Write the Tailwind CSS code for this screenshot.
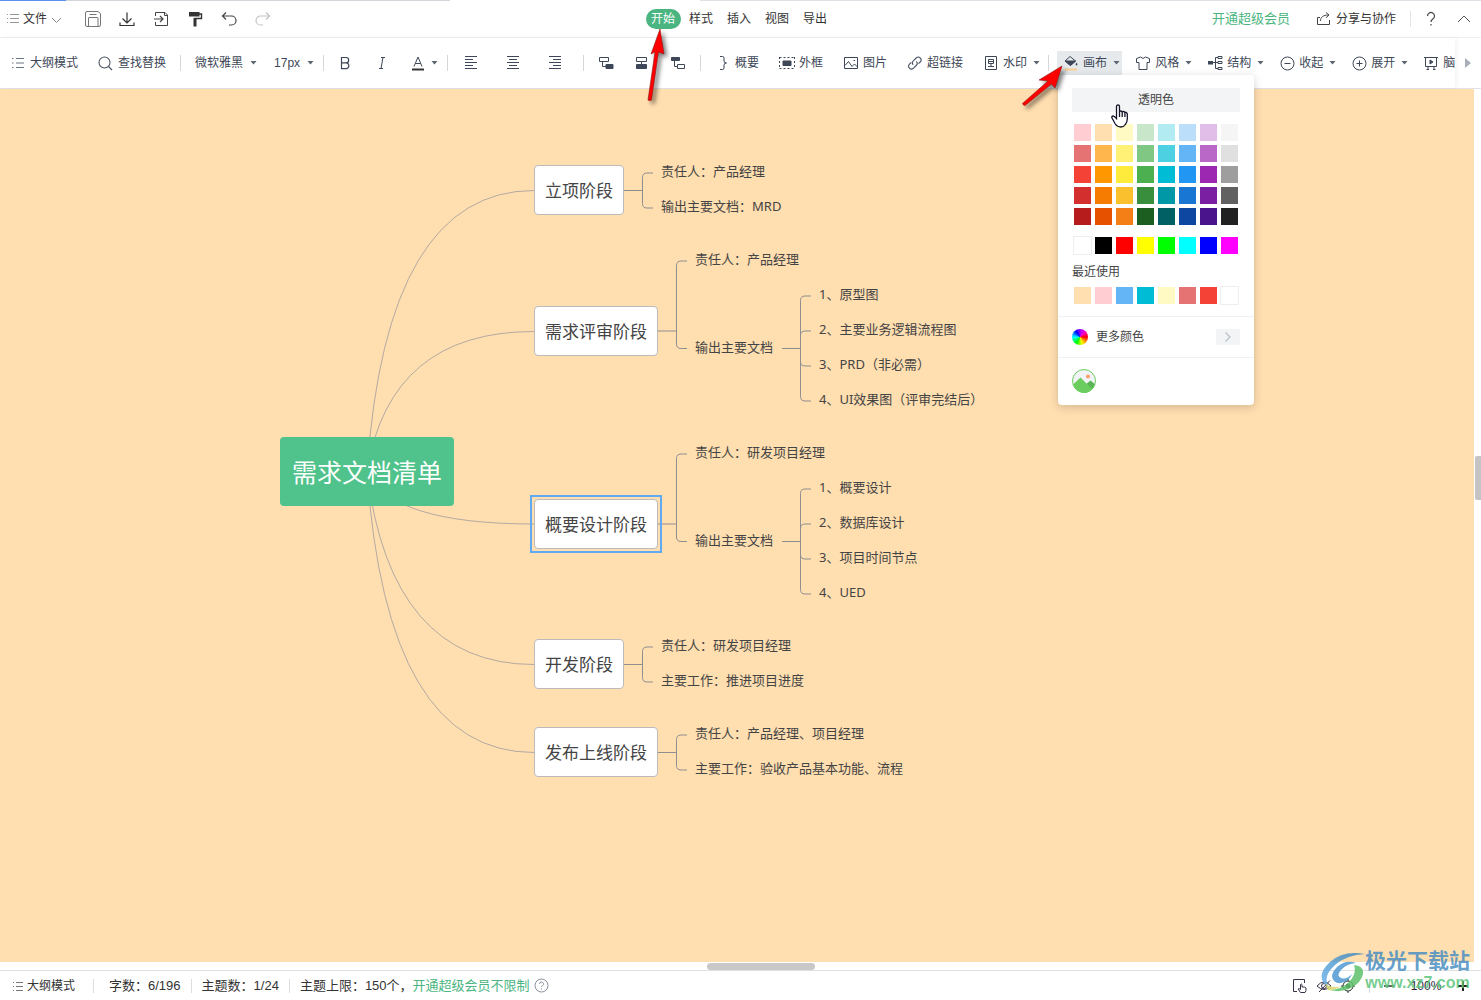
<!DOCTYPE html>
<html lang="zh-CN">
<head>
<meta charset="utf-8">
<meta name="viewport" content="width=device-width, initial-scale=1">
<title>需求文档清单</title>
<script src="https://cdn.jsdelivr.net/npm/@tailwindcss/browser@4"></script>
</head>
<body class="bg-white font-['Liberation_Sans','Noto_Sans_CJK_SC',sans-serif] text-xs text-[#3d4757]">
<svg class="hidden" aria-hidden="true">
  <symbol id="caret" viewBox="0 0 7 4"><path d="M.5 0h6L3.500 3.500z" fill="#5b6470"/></symbol>
</svg>
<div class="relative flex min-h-screen flex-col overflow-hidden">

  <!-- Loading strip along the window's top edge -->
  <div class="flex h-px shrink-0">
    <div class="w-[66px] bg-[#5b8ff0]"></div>
    <div class="w-[384px] bg-[#d4d5db]"></div>
    <div class="w-[250px]"></div>
    <div class="flex-1 bg-[#dfe0e5]"></div>
  </div>

  <!-- Menu bar -->
  <header class="flex h-[37px] shrink-0 items-center border-b border-[#eeeff1] text-[#333]">
    <div class="flex flex-1 items-center gap-[18px] pl-[7px]">
      <button class="mr-[5px] flex items-center gap-1">
        <svg class="h-3 w-3" viewBox="0 0 12 12" stroke="#999" fill="none"><path d="M0 1.500h1M3 1.500h9M0 5.500h1M3 5.500h9M0 9.500h1M3 9.500h9"/></svg>
        <span>文件</span>
        <svg class="h-[11px] w-[11px]" viewBox="0 0 11 11" stroke="#888" fill="none"><path d="M1 4l4.500 4.500L10 4"/></svg>
      </button>
      <button aria-label="保存"><svg class="h-4 w-4" viewBox="0 0 16 16" fill="none" stroke="#777"><path d="M.5 14V2Q.5.500 2 .5h11l2.500 2V14q0 1.500-1.500 1.500H2Q.5 15.500.5 14z"/><path d="M3.500 15V7Q3.500 6.500 4 6.500h8.500q.5 0 .5.500v8M4.500 3.500h7"/></svg></button>
      <button aria-label="下载"><svg class="h-4 w-4" viewBox="0 0 16 16" fill="none" stroke="#333" stroke-width="1.200"><path d="M8 1.500v10M3.500 7.500L8 12l4.500-4.500M1 11.500v3h14v-3"/></svg></button>
      <button aria-label="导出文件"><svg class="h-4 w-4" viewBox="0 0 16 16" fill="none" stroke="#444"><path d="M2.500 5V1.500h9.500l2.500 2.500v10.500h-12V11M11.500 1.500v3h3" /><path d="M1 8h8.500M7 5l3 3-3 3" stroke-width="1.200"/></svg></button>
      <button aria-label="格式刷"><svg class="h-4 w-4" viewBox="0 0 16 16" fill="none"><path d="M2 1h10.500v4.500H2z" fill="#333"/><path d="M12 3h2.500v4.500H7.500" stroke="#333" stroke-width="1.400"/><path d="M6.500 7h3v8.500h-3z" fill="#333"/></svg></button>
      <button aria-label="撤销"><svg class="h-4 w-4" viewBox="0 0 16 16" fill="none" stroke="#444" stroke-width="1.200"><path d="M5 1.500L1.500 5 5 8.500M2 5h8.500a4.500 4.500 0 0 1 0 9H8"/></svg></button>
      <button aria-label="重做"><svg class="h-4 w-4" viewBox="0 0 16 16" fill="none" stroke="#c4c4c4" stroke-width="1.200"><path d="M11 1.500L14.500 5 11 8.500M14 5H5.500a4.500 4.500 0 0 0 0 9H8"/></svg></button>
    </div>
    <nav class="grid grid-cols-5 pr-px text-center leading-5">
      <div class="w-[38px]"><button class="w-[35px] rounded-full bg-[#4ab580] text-white">开始</button></div>
      <button class="w-[38px]">样式</button>
      <button class="w-[38px]">插入</button>
      <button class="w-[38px]">视图</button>
      <button class="w-[38px]">导出</button>
    </nav>
    <div class="flex flex-1 items-center justify-end pr-[9px]">
      <a href="#" class="mr-[26px] text-[13px] text-[#4ab580]">开通超级会员</a>
      <button class="flex items-center gap-1">
        <svg class="h-4 w-4" viewBox="0 0 16 16" fill="none" stroke="#444"><path d="M4 6.500H1.500v7h12V9M4.500 10c0-4 3-6 8-6M10 1.500L13 4l-3 2.800"/></svg>
        分享与协作
      </button>
      <span class="mx-[14px] h-4 w-px bg-[#e3e4e6]"></span>
      <button aria-label="帮助" class="mr-[19px]"><svg class="h-4 w-[12px]" viewBox="0 0 12 16" fill="none" stroke="#444" stroke-width="1.200"><path d="M2.500 5a3.500 3.500 0 1 1 5.300 3Q6 9.200 6 11M6 13v1.500"/></svg></button>
      <button aria-label="收起工具栏"><svg class="h-4 w-4" viewBox="0 0 16 16" fill="none" stroke="#555"><path d="M2 11l6-6 6 6"/></svg></button>
    </div>
  </header>

  <!-- Tool bar -->
  <div class="flex h-[51px] shrink-0 items-center border-b border-[#e1e3e6]">
    <div class="flex h-[50px] min-w-0 flex-1 items-center overflow-hidden pl-[10px] whitespace-nowrap shadow-[2px_0_4px_rgba(0,0,0,0.05)]">
      <div class="flex shrink-0 items-center gap-5">
        <button class="flex items-center gap-1"><svg class="h-4 w-4" viewBox="0 0 16 16" fill="none" stroke="#6b7380"><path d="M2 3.500h1.500M6 3.500h8M2 8h1.500M6 8h8M2 12.500h1.500M6 12.500h8"/></svg>大纲模式</button>
        <button class="flex items-center gap-1"><svg class="h-4 w-4" viewBox="0 0 16 16" fill="none" stroke="#4b5563" stroke-width="1.100"><circle cx="6.500" cy="7.500" r="5.500"/><path d="M10.500 11.500l3.500 3.500"/></svg>查找替换</button>
      </div>
      <span class="mx-[14px] h-4 w-px shrink-0 bg-[#d5d7da]"></span>
      <div class="flex shrink-0 items-center gap-[17px]">
        <label class="relative flex items-center"><select aria-label="字体" class="w-[62px] appearance-none bg-transparent"><option>微软雅黑</option></select><svg class="pointer-events-none absolute right-0 h-1 w-[7px]"><use href="#caret"/></svg></label>
        <label class="relative flex items-center"><select aria-label="字号" class="w-10 appearance-none bg-transparent"><option>17px</option></select><svg class="pointer-events-none absolute right-0 h-1 w-[7px]"><use href="#caret"/></svg></label>
      </div>
      <span class="mx-[9px] h-4 w-px shrink-0 bg-[#d5d7da]"></span>
      <div class="ml-1 flex shrink-0 items-center gap-[21px]">
        <button aria-label="加粗"><svg class="h-4 w-4" viewBox="0 0 16 16" fill="none" stroke="#3d4757" stroke-width="1.200"><path d="M4.500 2.500H9a2.700 2.700 0 0 1 0 5.400H4.500zM4.500 7.900h5a2.900 2.900 0 0 1 0 5.700h-5z"/></svg></button>
        <button aria-label="斜体"><svg class="h-4 w-4" viewBox="0 0 16 16" fill="none" stroke="#3d4757"><path d="M7 2.500h4M5 13.500h4M9 2.500l-2 11"/></svg></button>
        <button aria-label="文字颜色" class="flex items-center gap-[6px]"><svg class="h-4 w-[14px]" viewBox="0 0 14 16" fill="none" stroke="#3d4757"><path d="M3 11.500L7 2l4 9.500M4.500 8.500h5"/><path d="M1 14.500h12" stroke-width="2" stroke="#333"/></svg><svg class="h-1 w-[7px]"><use href="#caret"/></svg></button>
      </div>
      <span class="mx-[9px] h-4 w-px shrink-0 bg-[#d5d7da]"></span>
      <div class="ml-[6px] flex shrink-0 items-center gap-[26px]">
        <button aria-label="左对齐"><svg class="h-4 w-4" viewBox="0 0 16 16" stroke="#3d4757"><path d="M2 1.500h12M2 4.500h8M2 7.500h12M2 10.500h8M2 13.500h12"/></svg></button>
        <button aria-label="居中"><svg class="h-4 w-4" viewBox="0 0 16 16" stroke="#3d4757"><path d="M2 1.500h12M4 4.500h8M2 7.500h12M4 10.500h8M2 13.500h12"/></svg></button>
        <button aria-label="右对齐"><svg class="h-4 w-4" viewBox="0 0 16 16" stroke="#3d4757"><path d="M2 1.500h12M6 4.500h8M2 7.500h12M6 10.500h8M2 13.500h12"/></svg></button>
      </div>
      <span class="mr-[14px] ml-5 h-4 w-px shrink-0 bg-[#d5d7da]"></span>
      <div class="flex shrink-0 items-center gap-5">
        <button aria-label="子主题"><svg class="h-4 w-4" viewBox="0 0 16 16" fill="none" stroke="#3d4757"><path d="M1.500 2.500h9v4h-9zM4.500 6.500v5H8"/><path d="M8 9.500h7v4H8z" fill="#3d4757"/></svg></button>
        <button aria-label="同级主题"><svg class="h-4 w-4" viewBox="0 0 16 16" fill="none" stroke="#3d4757"><path d="M2.500 2.500h10v4h-10zM7.500 6.500v3"/><path d="M2.500 9.500h10v4h-10z" fill="#3d4757"/></svg></button>
        <button aria-label="父主题"><svg class="h-4 w-4" viewBox="0 0 16 16" fill="none" stroke="#3d4757"><path d="M1.500 2.500h8v3h-8z" fill="#3d4757"/><path d="M4.500 6v5.500H7M7.500 9.500h7v4h-7z"/></svg></button>
      </div>
      <span class="mx-[14px] h-4 w-px shrink-0 bg-[#d5d7da]"></span>
      <div class="flex shrink-0 items-center gap-5">
        <button class="flex items-center gap-1"><svg class="h-4 w-4" viewBox="0 0 16 16" fill="none" stroke="#3d4757"><path d="M5 1.500h2.500Q9 1.500 9 3v3q0 2 2.500 2Q9 8 9 10v3q0 1.500-1.500 1.500H5"/></svg>概要</button>
        <button class="flex items-center gap-1"><svg class="h-4 w-4" viewBox="0 0 16 16" fill="none" stroke="#3d4757"><path d="M.5 2.500h15M.5 13.500h15M.5 2v12M15.500 2v12" stroke-dasharray="2 2"/><path d="M4 6h8v4.500H4z" fill="#3d4757"/></svg>外框</button>
        <button class="flex items-center gap-1"><svg class="h-4 w-4" viewBox="0 0 16 16" fill="none" stroke="#3d4757"><path d="M1.500 2.500h13v11h-13zM2 10.500l3.500-4 3.500 5 2.500-2.500 3 3"/><path d="M10.500 5.500h1.500"/></svg>图片</button>
        <button class="flex items-center gap-1"><svg class="h-4 w-4" viewBox="0 0 16 16" fill="none" stroke="#4b5563" stroke-width="1.100"><path d="M6.200 9.800a3 3 0 0 1 .3-4.100l2.700-2.700a2.800 2.800 0 0 1 4 4L11.500 8.700M9.300 6.300a3 3 0 0 1-.1 4.200L6.500 13.200a2.800 2.800 0 0 1-4-4L4.300 7.500"/></svg>超链接</button>
        <button class="flex items-center gap-1"><svg class="h-4 w-4" viewBox="0 0 16 16" fill="none" stroke="#3d4757"><path d="M2.500 1.500h11v13h-11z"/><path d="M5 11.500h6M5.500 4.500h5v4h-5zM5.500 6.500h5M8 8.500v3"/></svg>水印<svg class="ml-[2px] h-1 w-[7px]"><use href="#caret"/></svg></button>
      </div>
      <span class="mx-2 h-4 w-px shrink-0 bg-[#d5d7da]"></span>
      <div class="flex shrink-0 items-center gap-[15px]">
        <button class="-mr-[2px] flex h-6 items-center gap-1 bg-[#e6eaed] pr-[2px] pl-[6px]"><svg class="h-4 w-4" viewBox="0 0 16 16" fill="none" stroke="#3d4757"><path d="M2 6L7 1.500 12.500 6 7.500 10.500z" /><path d="M2 6h10.500L7.500 10.500z" fill="#3d4757"/><path d="M13.500 7.500c1.500 2 1 3 0 3s-1.300-1 0-3z" fill="#3d4757" stroke="none"/><path d="M2 14.500h12" stroke="#ffcf8e" stroke-width="2"/></svg>画布<svg class="ml-[2px] h-1 w-[7px]"><use href="#caret"/></svg></button>
        <button class="flex items-center gap-1"><svg class="h-4 w-4" viewBox="0 0 16 16" fill="none" stroke="#3d4757"><path d="M5.500 2L1.500 3.500v4H4v7h8v-7h2.500v-4L10.500 2Q8 5 5.500 2z"/></svg>风格<svg class="ml-[2px] h-1 w-[7px]"><use href="#caret"/></svg></button>
        <button class="flex items-center gap-1"><svg class="h-4 w-4" viewBox="0 0 16 16" fill="none" stroke="#3d4757"><path d="M1 6h5v3.500H1z" fill="#3d4757" stroke="none"/><path d="M6 7.500h5M8.500 7.500v-5H11M8.500 7.500v6H11M11 1.500h4v2h-4zM11 6.500h4v2h-4zM11 12.500h4v2h-4z"/></svg>结构<svg class="ml-[2px] h-1 w-[7px]"><use href="#caret"/></svg></button>
        <button class="flex items-center gap-1"><svg class="h-4 w-4" viewBox="0 0 16 16" fill="none" stroke="#3d4757"><circle cx="8.500" cy="8.500" r="6.500"/><path d="M5.500 8.500h6"/></svg>收起<svg class="ml-[2px] h-1 w-[7px]"><use href="#caret"/></svg></button>
        <button class="flex items-center gap-1"><svg class="h-4 w-4" viewBox="0 0 16 16" fill="none" stroke="#3d4757"><circle cx="8.500" cy="8.500" r="6.500"/><path d="M5.500 8.500h6M8.500 5.500v6"/></svg>展开<svg class="ml-[2px] h-1 w-[7px]"><use href="#caret"/></svg></button>
        <button class="flex items-center gap-1"><svg class="h-4 w-4" viewBox="0 0 16 16" fill="none" stroke="#3d4757"><path d="M1 2.500h14M2.500 2.500v9h11v-9M5 11.500v3M11 11.500v3M3.500 14.500H6M10 14.500h2.500"/><path d="M7 5l3 2-3 2z" fill="#3d4757"/></svg>脑图</button>
      </div>
    </div>
    <button aria-label="更多工具" class="flex w-[26px] shrink-0 justify-center"><svg class="h-[10px] w-[6px]" viewBox="0 0 6 10"><path d="M0 0l6 5-6 5z" fill="#a9b0ba"/></svg></button>
  </div>

  <!-- Mind map canvas -->
  <main class="flex min-h-[700px] flex-1">
    <div class="relative flex-1 overflow-hidden bg-[#ffdeb0] font-['Noto_Sans','Noto_Sans_CJK_SC',sans-serif] text-[13px] leading-5 whitespace-nowrap text-[#444]">
      <svg class="absolute top-0 left-0 h-[700px] w-[1000px]" viewBox="0 89 1000 700" fill="none" stroke="#8f8f8f">
        <g stroke="#b3aaa2">
          <path d="M367 471Q386 190.500 534 190.500"/>
          <path d="M367 471Q390 331.500 534 331.500"/>
          <path d="M367 471Q390 524 534 524"/>
          <path d="M367 471Q390 664.500 534 664.500"/>
          <path d="M367 471Q386 752.500 534 752.500"/>
        </g>
        <path d="M624 190.500h18.500M653 173h-6q-4.500 0-4.500 4.500v26q0 4.500 4.500 4.500h6"/>
        <path d="M658 331h18.500M687 261h-6q-4.500 0-4.500 4.500v78.500q0 4.500 4.500 4.500h6"/>
        <path d="M782 348.500h18.500M811 296h-6q-4.500 0-4.500 4.500v96q0 4.500 4.500 4.500h6M811 331h-6q-4.500 0-4.500 4.500M811 366h-6q-4.500 0-4.500-4.500"/>
        <path d="M658 524h18.500M687 454h-6q-4.500 0-4.500 4.500V537q0 4.500 4.500 4.500h6"/>
        <path d="M782 541.500h18.500M811 489h-6q-4.500 0-4.500 4.500v96q0 4.500 4.500 4.500h6M811 524h-6q-4.500 0-4.500 4.500M811 559h-6q-4.500 0-4.500-4.500"/>
        <path d="M624 664.500h18.500M653 647h-6q-4.500 0-4.500 4.500v26q0 4.500 4.500 4.500h6"/>
        <path d="M658 752.500h18.500M687 735h-6q-4.500 0-4.500 4.500v26q0 4.500 4.500 4.500h6"/>
      </svg>

      <div class="absolute top-[348px] left-[280px] flex h-[69px] w-[174px] items-center justify-center rounded-sm bg-[#50c28b] text-[25px] text-white">需求文档清单</div>

      <div class="absolute top-[76px] left-[534px] flex h-[50px] w-[90px] items-center justify-center rounded-sm border border-[#bbb] bg-white pt-[2px] text-[17px]">立项阶段</div>
      <div class="absolute top-[72px] left-[661px]">责任人：产品经理</div>
      <div class="absolute top-[107px] left-[661px]">输出主要文档：MRD</div>

      <div class="absolute top-[217px] left-[534px] flex h-[50px] w-[124px] items-center justify-center rounded-sm border border-[#bbb] bg-white pt-[2px] text-[17px]">需求评审阶段</div>
      <div class="absolute top-[160px] left-[695px]">责任人：产品经理</div>
      <div class="absolute top-[248px] left-[695px]">输出主要文档</div>
      <div class="absolute top-[195px] left-[819px]">1、原型图</div>
      <div class="absolute top-[230px] left-[819px]">2、主要业务逻辑流程图</div>
      <div class="absolute top-[265px] left-[819px]">3、PRD（非必需）</div>
      <div class="absolute top-[300px] left-[819px]">4、UI效果图（评审完结后）</div>

      <div class="absolute top-[406px] left-[530px] h-[58px] w-[132px] border-2 border-[#5fa9f5]"></div>
      <div class="absolute top-[410px] left-[534px] flex h-[50px] w-[124px] items-center justify-center rounded-sm border border-[#bbb] bg-white pt-[2px] text-[17px]">概要设计阶段</div>
      <div class="absolute top-[353px] left-[695px]">责任人：研发项目经理</div>
      <div class="absolute top-[441px] left-[695px]">输出主要文档</div>
      <div class="absolute top-[388px] left-[819px]">1、概要设计</div>
      <div class="absolute top-[423px] left-[819px]">2、数据库设计</div>
      <div class="absolute top-[458px] left-[819px]">3、项目时间节点</div>
      <div class="absolute top-[493px] left-[819px]">4、UED</div>

      <div class="absolute top-[550px] left-[534px] flex h-[50px] w-[90px] items-center justify-center rounded-sm border border-[#bbb] bg-white pt-[2px] text-[17px]">开发阶段</div>
      <div class="absolute top-[546px] left-[661px]">责任人：研发项目经理</div>
      <div class="absolute top-[581px] left-[661px]">主要工作：推进项目进度</div>

      <div class="absolute top-[638px] left-[534px] flex h-[50px] w-[124px] items-center justify-center rounded-sm border border-[#bbb] bg-white pt-[2px] text-[17px]">发布上线阶段</div>
      <div class="absolute top-[634px] left-[695px]">责任人：产品经理、项目经理</div>
      <div class="absolute top-[669px] left-[695px]">主要工作：验收产品基本功能、流程</div>
    </div>
    <div class="flex w-[7px] shrink-0 flex-col items-end pt-[367px]"><div class="h-11 w-[6px] rounded-l-xs bg-[#c4c4c4]"></div></div>
  </main>
  <div class="flex h-2 shrink-0 items-center pl-[707px]"><div class="h-[7px] w-[108px] rounded-sm bg-[#c8c8c8]"></div></div>

  <!-- Status bar -->
  <footer class="flex h-[30px] shrink-0 items-center border-t border-[#dfe1e3] text-[13px] whitespace-nowrap text-[#333]">
    <button class="flex items-center gap-1 pl-[13px] text-xs"><svg class="h-[10px] w-[10px]" viewBox="0 0 10 10" stroke="#777"><path d="M0 1.500h1M3 1.500h7M0 5.500h1M3 5.500h7M0 9.500h1M3 9.500h7"/></svg>大纲模式</button>
    <span class="mr-[15px] ml-[18px] h-[14px] w-px bg-[#dcdee0]"></span>
    <span>字数：6/196</span>
    <span class="mx-[10px] h-[14px] w-px bg-[#dcdee0]"></span>
    <span>主题数：1/24</span>
    <span class="mx-[10px] h-[14px] w-px bg-[#dcdee0]"></span>
    <span>主题上限：150个，<a href="#" class="text-[#4ab580]">开通超级会员不限制</a></span>
    <svg class="ml-1 h-[15px] w-[15px]" viewBox="0 0 15 15" fill="none" stroke="#8a919e"><circle cx="7.500" cy="7.500" r="6.500"/><path d="M5.500 6a2 2 0 1 1 3 1.700q-1 .5-1 1.500M7.500 10.500v1"/></svg>
    <div class="ml-auto flex items-center pr-3 text-[#2c2438]">
      <button aria-label="拖动画布"><svg class="h-4 w-4" viewBox="0 0 16 16" fill="none" stroke="#3a3048"><path d="M5 13.500H1.500v-12h11V5"/><path d="M8.500 14.500L6 11q1-1 2.500.5v-5q1-1 1.500 0V9q3-.5 4 1 .5 3-1 4.500z"/></svg></button>
      <button aria-label="隐藏导航" class="ml-2"><svg class="h-4 w-4" viewBox="0 0 16 16" fill="none" stroke="#3a3048"><path d="M1 8q7-8 14 0Q8 15 1 8zM3 14L14 2.500"/><circle cx="8" cy="8" r="2.500"/></svg></button>
      <button aria-label="定位中心" class="ml-2"><svg class="h-4 w-4" viewBox="0 0 16 16" fill="none" stroke="#26342a"><circle cx="8" cy="8" r="5"/><circle cx="8" cy="8" r="2" fill="#26342a"/><path d="M8 1v2M8 13v2M1 8h2M13 8h2"/></svg></button>
      <span class="mx-[13px] h-[14px] w-px bg-[#dcdee0]"></span>
      <button aria-label="缩小"><svg class="h-3 w-3" viewBox="0 0 12 12" stroke="#333" stroke-width="1.500"><path d="M1 6h10"/></svg></button>
      <span class="w-[62px] text-center text-xs">100%</span>
      <button aria-label="放大"><svg class="h-3 w-3" viewBox="0 0 12 12" stroke="#222" stroke-width="2"><path d="M1 6h10M6 1v10"/></svg></button>
    </div>
  </footer>

  <!-- Canvas colour panel -->
  <section class="absolute top-[75px] left-[1058px] w-[196px] rounded bg-white text-[#444] shadow-[0_2px_10px_rgba(0,0,0,0.18)]">
    <div class="px-[14px] pt-[13px] pb-3">
      <button class="block h-6 w-full bg-[#f3f4f6]">透明色</button>
      <div class="mx-[2px] mt-3 grid grid-cols-8 gap-1">
        <button aria-label="浅红" class="h-[17px] bg-[#ffcdd2]"></button><button aria-label="浅橙" class="h-[17px] bg-[#ffdeb0]"></button><button aria-label="浅黄" class="h-[17px] bg-[#fff9c4]"></button><button aria-label="浅绿" class="h-[17px] bg-[#c8e6c9]"></button><button aria-label="浅青" class="h-[17px] bg-[#b2ebf2]"></button><button aria-label="浅蓝" class="h-[17px] bg-[#bbdefb]"></button><button aria-label="浅紫" class="h-[17px] bg-[#e1bee7]"></button><button aria-label="浅灰" class="h-[17px] bg-[#f5f5f5]"></button>
        <button aria-label="红 300" class="h-[17px] bg-[#e57373]"></button><button aria-label="橙 300" class="h-[17px] bg-[#ffb74d]"></button><button aria-label="黄 300" class="h-[17px] bg-[#fff176]"></button><button aria-label="绿 300" class="h-[17px] bg-[#81c784]"></button><button aria-label="青 300" class="h-[17px] bg-[#4dd0e1]"></button><button aria-label="蓝 300" class="h-[17px] bg-[#64b5f6]"></button><button aria-label="紫 300" class="h-[17px] bg-[#ba68c8]"></button><button aria-label="灰 300" class="h-[17px] bg-[#e0e0e0]"></button>
        <button aria-label="红 500" class="h-[17px] bg-[#f44336]"></button><button aria-label="橙 500" class="h-[17px] bg-[#ff9800]"></button><button aria-label="黄 500" class="h-[17px] bg-[#ffeb3b]"></button><button aria-label="绿 500" class="h-[17px] bg-[#4caf50]"></button><button aria-label="青 500" class="h-[17px] bg-[#00bcd4]"></button><button aria-label="蓝 500" class="h-[17px] bg-[#2196f3]"></button><button aria-label="紫 500" class="h-[17px] bg-[#9c27b0]"></button><button aria-label="灰 500" class="h-[17px] bg-[#9e9e9e]"></button>
        <button aria-label="红 700" class="h-[17px] bg-[#d32f2f]"></button><button aria-label="橙 700" class="h-[17px] bg-[#f57c00]"></button><button aria-label="黄 700" class="h-[17px] bg-[#fbc02d]"></button><button aria-label="绿 700" class="h-[17px] bg-[#388e3c]"></button><button aria-label="青 700" class="h-[17px] bg-[#0097a7]"></button><button aria-label="蓝 700" class="h-[17px] bg-[#1976d2]"></button><button aria-label="紫 700" class="h-[17px] bg-[#7b1fa2]"></button><button aria-label="灰 700" class="h-[17px] bg-[#616161]"></button>
        <button aria-label="红 900" class="h-[17px] bg-[#b71c1c]"></button><button aria-label="橙 900" class="h-[17px] bg-[#e65100]"></button><button aria-label="黄 900" class="h-[17px] bg-[#f57f17]"></button><button aria-label="绿 900" class="h-[17px] bg-[#1b5e20]"></button><button aria-label="青 900" class="h-[17px] bg-[#006064]"></button><button aria-label="蓝 900" class="h-[17px] bg-[#0d47a1]"></button><button aria-label="紫 900" class="h-[17px] bg-[#4a148c]"></button><button aria-label="灰 900" class="h-[17px] bg-[#212121]"></button>
      </div>
      <div class="mx-[2px] mt-3 grid grid-cols-8 gap-1">
        <button aria-label="白" class="h-[17px] bg-white ring-1 ring-[#eee]"></button><button aria-label="黑" class="h-[17px] bg-[#000]"></button><button aria-label="纯红" class="h-[17px] bg-[#f00]"></button><button aria-label="纯黄" class="h-[17px] bg-[#ff0]"></button><button aria-label="纯绿" class="h-[17px] bg-[#0f0]"></button><button aria-label="纯青" class="h-[17px] bg-[#0ff]"></button><button aria-label="纯蓝" class="h-[17px] bg-[#00f]"></button><button aria-label="品红" class="h-[17px] bg-[#f0f]"></button>
      </div>
      <h3 class="mt-[10px] mb-[6px] leading-[17px]">最近使用</h3>
      <div class="mx-[2px] grid grid-cols-8 gap-1">
        <button aria-label="最近 1" class="h-[17px] bg-[#ffdeb0]"></button><button aria-label="最近 2" class="h-[17px] bg-[#ffcdd2]"></button><button aria-label="最近 3" class="h-[17px] bg-[#64b5f6]"></button><button aria-label="最近 4" class="h-[17px] bg-[#00bcd4]"></button><button aria-label="最近 5" class="h-[17px] bg-[#fff9c4]"></button><button aria-label="最近 6" class="h-[17px] bg-[#e57373]"></button><button aria-label="最近 7" class="h-[17px] bg-[#f44336]"></button><button aria-label="最近 8" class="h-[17px] bg-white ring-1 ring-[#eee]"></button>
      </div>
    </div>
    <button class="flex h-[41px] w-full items-center border-t border-[#f0f1f3] px-[14px]">
      <span class="mr-2 h-4 w-4 rounded-full bg-[conic-gradient(#90f,#f0c_45deg,#f00_90deg,#ff0_160deg,#0f0_210deg,#0ff_270deg,#00f_325deg,#90f)]"></span>更多颜色
      <span class="ml-auto flex h-4 w-6 items-center justify-center rounded-xs bg-[#f3f4f6]"><svg class="h-[10px] w-[6px]" viewBox="0 0 6 10" fill="none" stroke="#b8bfc6" stroke-width="1.200"><path d="M.5.500L5 5 .5 9.500"/></svg></span>
    </button>
    <div class="border-t border-[#f0f1f3] px-[14px] pt-[11px] pb-3">
      <button aria-label="背景图片" class="block"><svg class="h-6 w-6" viewBox="0 0 24 24"><clipPath id="disc"><circle cx="12" cy="12" r="11.500"/></clipPath><g clip-path="url(#disc)"><path d="M0 0h24v24H0z" fill="#f1f3f6"/><path d="M13 16l5.500-4.500L24 16v8H13z" fill="#5bb558"/><path d="M-1 17.500L8.500 8.500 19 19l-2 5H0z" fill="#6acd5e"/><path d="M8 24l10-6 4 3-4 3z" fill="#6acd5e"/><circle cx="16" cy="7.500" r="2" fill="#ffa06a"/></g><circle cx="12" cy="12" r="11.500" fill="none" stroke="#6acd5e"/></svg></button>
    </div>
  </section>

  <!-- Pointer and guide arrows -->
  <svg class="pointer-events-none absolute top-0 left-[640px] h-[112px] w-[500px]" viewBox="640 0 500 112">
    <g fill="#f00" stroke="#8c1414" stroke-width="0.600" class="drop-shadow-[3px_3px_2px_rgba(0,0,0,0.5)]">
      <path d="M660 29l4 25-5.500-2L651.500 100q-1.500 1.500-3.500 0l7-48-4 2z"/>
      <path d="M1062 66l-7 22-3.500-4L1025 105.500q-2 0-2.500-2L1048 81l-9-1z"/>
    </g>
  </svg>
  <svg class="pointer-events-none absolute top-[104px] left-[1110px] h-6 w-5" viewBox="0 0 20 24" fill="#fff" stroke="#15152a" stroke-width="1.300"><path d="M6.500 13V2.500q0-1.500 1.500-1.500t1.500 1.500V8q0-1 1.300-1t1.400 1.500q.2-1.200 1.400-1t1.300 1.500q.3-1 1.200-.7t1.200 1.700v5q0 3-2 5.500-1.500 2.500-4.500 2.500-3.500 0-5.500-3L2 14q-.8-1.500 1-2 1-.2 3.500 2.500zM9.500 8v5M12.200 8.500V13M14.900 9v4"/></svg>

  <!-- Site mark -->
  <div class="pointer-events-none absolute right-[11px] bottom-[6px] flex items-center">
    <svg class="h-[42px] w-[44px] opacity-85" viewBox="0 0 44 42">
      <defs><linearGradient id="swirl" x1="1" y1="0" x2="0" y2="1"><stop offset="0" stop-color="#3f86b8"/><stop offset="1" stop-color="#6cb4ec"/></linearGradient></defs>
      <path d="M44 3Q22-1 9 11-3 22 2 31q1 3 5 3Q2 25 14 14 25 4 44 3z" fill="url(#swirl)"/>
      <path d="M35 12q-10-4-19 4-8 8-3 14 6 5 14-1 3-3 4-6-6 6-11 4-5-3 0-8 5-6 15-7z" fill="#4f9ad2"/>
      <path d="M33 14q10 1 9 9-2 9-12 14-10 5-21 2 12-1 19-8 8-8 5-17z" fill="#5fc06a"/>
      <path d="M4 32q6 6 16 3-7 5-13 4z" fill="#d9d76a"/>
    </svg>
    <div class="text-center leading-[22px] font-bold whitespace-nowrap">
      <div class="text-[21px] text-[#4a8fc2]/85">极光下载站</div>
      <div class="text-[16px] text-[#5ec57c]/85">www.xz7.com</div>
    </div>
  </div>
</div>
</body>
</html>
